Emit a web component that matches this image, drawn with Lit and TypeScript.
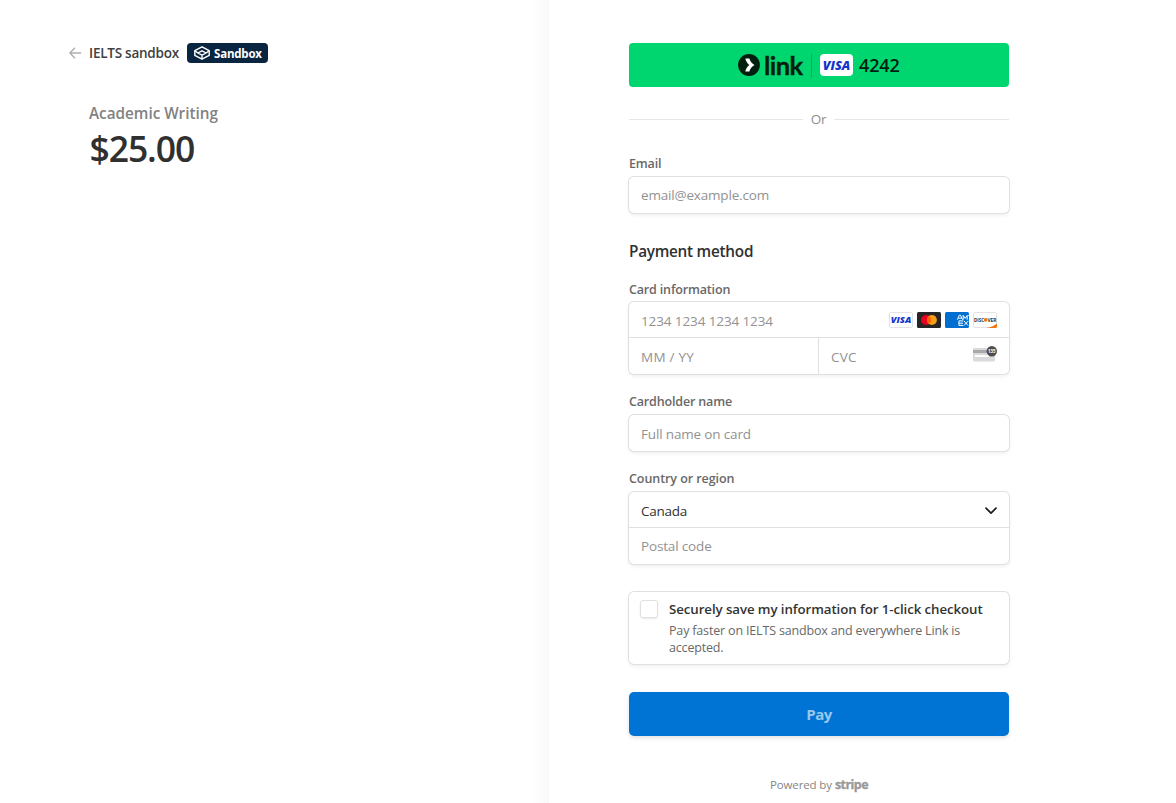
import { LitElement, html, svg, css } from "lit";
import { customElement } from "lit/decorators.js";

const backArrow = svg`<svg class="back" width="13" height="12" viewBox="0 0 13 12" fill="none" stroke="#b0b0b0" stroke-width="1.5" stroke-linecap="round" stroke-linejoin="round"><path d="M11.600 6H1M5.500 1.300L.9 6l4.600 4.700"/></svg>`;

const sandboxMark = svg`<svg width="16" height="14" viewBox="0 0 16 14" fill="none" stroke="#fff" stroke-width="1.4" stroke-linejoin="round"><path d="M8 .8l7.200 3.800v4.800L8 13.200.8 9.400V4.600z"/><path d="M3.800 7L8 4.800 12.200 7 8 9.200zM1 4.700L3.800 7M15 4.700L12.200 7M8 9.200v3.600"/></svg>`;

const visa = (w: number, h: number, size: number, ring: string, y: number, len: number) => svg`<svg width=${w} height=${h} viewBox="0 0 ${w} ${h}"><rect x=".5" y=".5" width=${w - 1} height=${h - 1} rx=${w > 25 ? 3 : 1} fill="#fff" stroke=${ring}/><text x=${w / 2} y=${y} text-anchor="middle" textLength=${len} lengthAdjust="spacingAndGlyphs" font-family="Open Sans, sans-serif" font-size=${size} font-weight="800" font-style="italic" fill="#1434cb">VISA</text></svg>`;

const mastercard = svg`<svg width="24" height="16" viewBox="0 0 24 16"><rect width="24" height="16" rx="1.500" fill="#252525"/><circle cx="9.100" cy="8" r="5" fill="#eb001b"/><circle cx="14.900" cy="8" r="5" fill="#f79e1b"/><path d="M12 3.930a5 5 0 010 8.140 5 5 0 010-8.140z" fill="#ff5f00"/></svg>`;

const amex = svg`<svg width="24" height="16" viewBox="0 0 24 16"><rect width="24" height="16" rx="1.500" fill="#016fd0"/><g fill="none" stroke="#fff" stroke-width="1"><path d="M12.300 7.700l2-4.500h1.200l2 4.500M13.200 6.200h3.400M18.200 7.700V3.400l2 3 2-3v4.300M24 3.400h-.8"/><path d="M18.200 8.900h-4.300v4.500h4.300M14 11.200h4M18.900 8.900l4.300 4.600M23.300 8.900L19 13.500"/></g></svg>`;

const discover = svg`<svg width="24" height="16" viewBox="0 0 24 16"><rect x=".5" y=".5" width="23" height="15" rx="1" fill="#fff" stroke="#e3e3e3"/><path d="M24 11.500v3a1.500 1.500 0 01-1.500 1.500H13.500C17.800 15.200 21.500 13.500 24 11.500z" fill="#f27712"/><text x="1" y="9.500" textLength="10" lengthAdjust="spacingAndGlyphs" font-family="Open Sans, sans-serif" font-size="4.600" font-weight="700" fill="#333">DISC</text><circle cx="12.600" cy="7.900" r="1.800" fill="#f27712"/><text x="14.400" y="9.500" textLength="9" lengthAdjust="spacingAndGlyphs" font-family="Open Sans, sans-serif" font-size="4.600" font-weight="700" fill="#333">VER</text></svg>`;

const cvcCard = svg`<svg class="cvc-icon" width="25" height="16" viewBox="0 0 25 16"><rect y="2" width="22" height="13.500" rx="1.500" fill="#dadada"/><rect y="4" width="22" height="3" fill="#a9a9a9"/><rect x="2" y="9" width="14" height="2" fill="#fff"/><circle cx="18.800" cy="5.300" r="5.200" fill="#4d4d4d"/><text x="18.800" y="7.300" text-anchor="middle" textLength="7.600" lengthAdjust="spacingAndGlyphs" font-family="Open Sans, sans-serif" font-size="5.800" font-weight="700" fill="#fff">135</text></svg>`;

@customElement("app-root")
export class AppRoot extends LitElement {
  static styles = css`
    :host { display: block; font-family: "Open Sans", "Noto Sans", sans-serif; color: #303030; }
    * { box-sizing: border-box; }
    svg { display: block; flex: none; }
    .page { display: grid; grid-template-columns: 549px 1fr; height: 803px; overflow: hidden; background: #fff; }
    .summary { padding: 43px 0 0 69px; background: linear-gradient(to right, rgba(0,0,0,0) calc(100% - 18px), rgba(0,0,0,.025)); }
    .merchant { display: flex; align-items: center; height: 20px; }
    .name { width: 98px; margin-left: 7px; font-weight: 600; font-size: 13.5px; letter-spacing: -.24px; white-space: nowrap; color: #404040; }
    .badge { display: flex; align-items: center; gap: 4px; width: 81px; height: 20px; padding-left: 7px; border-radius: 4px; background: #0a2540; color: #fff; font-weight: 700; font-size: 11.5px; letter-spacing: -.2px; line-height: 20px; }
    .badge span { padding-top: 1px; }
    .product { margin: 38px 0 0 20px; line-height: 24px; font-weight: 600; font-size: 15.3px; letter-spacing: -.02px; color: #828282; }
    .amount { margin: 0 0 0 20.500px; line-height: 46px; font-weight: 600; font-size: 35.5px; letter-spacing: -1.100px; color: #303030; }
    .form { width: 380px; margin-left: 80px; padding-top: 43px; }
    .link-pay { display: flex; align-items: center; width: 100%; height: 44px; padding: 0 0 0 109px; border: 0; border-radius: 4px; background: #00d66f; color: #011e0f; font-family: inherit; }
    .wordmark { width: 47px; margin-left: 4px; font-family: Lato, sans-serif; font-weight: 700; font-size: 25.500px; line-height: 28px; padding-bottom: 1px; letter-spacing: -.55px; text-align: left; -webkit-text-stroke: .35px #011e0f; }
    .bar { width: 1px; height: 23px; margin-right: 8px; background: #00ae5d; }
    .last4 { margin-left: 6px; font-weight: 600; font-size: 18px; letter-spacing: -.15px; }
    .or { display: grid; grid-template-columns: 174px 1fr 175px; align-items: center; height: 20px; margin-top: 22px; text-align: center; font-size: 13.5px; letter-spacing: -.3px; color: #8c8c8c; }
    .or i { height: 1px; background: #e6e6e6; }
    .label { display: block; height: 20px; padding-top: 1px; line-height: 20px; font-weight: 600; font-size: 12.5px; letter-spacing: -.16px; color: #686868; }
    .email-label { margin-top: 24px; }
    .title { margin: 28px 0 18px; font-weight: 600; font-size: 15.3px; letter-spacing: -.25px; line-height: 20px; color: #303030; }
    .box { margin-top: 3px; border-radius: 5px; background: #fff; box-shadow: 0 0 0 1px #e0e0e0, 0 2px 4px rgba(0,0,0,.08); }
    .email { margin-top: 4px; }
    .row { display: flex; align-items: center; height: 36px; padding-right: 12px; }
    .row.first { height: 35px; }
    .split { border-top: 1px solid #e0e0e0; height: 37px; }
    .cell { display: flex; align-items: center; height: 36px; width: 189px; }
    .cell + .cell { width: 191px; border-left: 1px solid #e0e0e0; }
    .row.split { padding-right: 0; }
    input { flex: 1; min-width: 0; height: 34px; padding: 0 0 0 12px; border: 0; outline: 0; background: none; font: 400 13.5px "Open Sans", sans-serif; letter-spacing: -.16px; color: #303030; }
    input::placeholder { color: #929292; opacity: 1; }
    .number { letter-spacing: -.11px; padding-top: 3px; }
    .wide { letter-spacing: .26px; padding-top: 2px; }
    .holder { padding-top: 2px; }
    .email input { letter-spacing: -.18px; }
    .brands { display: flex; gap: 4px; padding-top: 1px; }
    .cvc-icon { margin: -5px 11px 0 0; }
    .gap { margin-top: 18px; padding-top: 0; }
    .region { letter-spacing: -.07px; }
    .country { flex: 1; padding: 3px 0 0 12px; font-size: 13.5px; letter-spacing: -.25px; color: #303030; }
    .chev { margin-top: 3px; }
    .save { display: flex; height: 72px; margin-top: 28px; padding: 8px 0 0 11px; }
    .check { width: 18px; height: 18px; flex: none; margin-right: 11px; border: 1px solid #e0e0e0; border-radius: 3px; box-shadow: 0 1px 2px rgba(0,0,0,.09); }
    .save-title { font-weight: 600; font-size: 13.3px; letter-spacing: -.09px; line-height: 18px; white-space: nowrap; color: #333; }
    .save-copy { width: 305px; margin-top: 4px; font-size: 12.5px; letter-spacing: -.17px; line-height: 17px; color: #686868; }
    .pay { display: block; width: 100%; height: 44px; margin-top: 28px; padding: 0 0 1px; border: 0; border-radius: 5px; background: #0074d4; box-shadow: 0 2px 4px rgba(0,0,0,.12); font: 700 15px "Open Sans", sans-serif; letter-spacing: -.45px; color: #99c7ee; }
    .footer { display: flex; justify-content: center; align-items: center; gap: 3px; height: 20px; margin-top: 38px; font-size: 11.5px; letter-spacing: -.12px; color: #858585; }
    .footer b { font-weight: 700; font-size: 12.5px; letter-spacing: -.55px; color: #989898; -webkit-text-stroke: .3px #989898; }
  `;

  render() {
    return html`<main class="page">
      <section class="summary">
        <div class="merchant">${backArrow}<span class="name">IELTS sandbox</span><span class="badge">${sandboxMark}<span>Sandbox</span></span></div>
        <div class="product">Academic Writing</div>
        <div class="amount">$25.00</div>
      </section>
      <section class="form">
        <button class="link-pay">
          <svg width="22" height="22" viewBox="0 0 22 22"><circle cx="11" cy="11" r="10.900" fill="#011e0f"/><path d="M7.300 4.500h4.100c.7 2.700 2.600 5 5.100 6.500-2.500 1.500-4.400 3.800-5.100 6.500H7.300c.6-2.600 2-4.900 4-6.500-2-1.600-3.400-3.900-4-6.500z" fill="#fff"/></svg>
          <span class="wordmark">link</span><span class="bar"></span>
          ${visa(33, 22, 12, "#fff", 15.5, 27.5)}
          <span class="last4">4242</span>
        </button>
        <div class="or"><i></i><span>Or</span><i></i></div>
        <label class="label email-label">Email</label>
        <div class="box email"><div class="row"><input placeholder="email@example.com"></div></div>
        <div class="title">Payment method</div>
        <label class="label">Card information</label>
        <div class="box">
          <div class="row first"><input class="number" placeholder="1234 1234 1234 1234"><div class="brands">${visa(24, 16, 9, "#e3e3e3", 11.3, 20.5)}${mastercard}${amex}${discover}</div></div>
          <div class="row split"><div class="cell"><input class="wide" placeholder="MM / YY"></div><div class="cell"><input class="wide" placeholder="CVC">${cvcCard}</div></div>
        </div>
        <label class="label gap">Cardholder name</label>
        <div class="box"><div class="row"><input class="holder" placeholder="Full name on card"></div></div>
        <label class="label gap region">Country or region</label>
        <div class="box">
          <div class="row first"><span class="country">Canada</span><svg class="chev" width="12" height="8" viewBox="0 0 12 8" fill="none" stroke="#1a1a1a" stroke-width="1.700" stroke-linecap="round" stroke-linejoin="round"><path d="M1 1.200l5 5 5-5"/></svg></div>
          <div class="row split"><input placeholder="Postal code"></div>
        </div>
        <div class="box save"><span class="check"></span><div><div class="save-title">Securely save my information for 1-click checkout</div><div class="save-copy">Pay faster on IELTS sandbox and everywhere Link is accepted.</div></div></div>
        <button class="pay">Pay</button>
        <div class="footer"><span>Powered by</span><b>stripe</b></div>
      </section>
    </main>`;
  }
}
